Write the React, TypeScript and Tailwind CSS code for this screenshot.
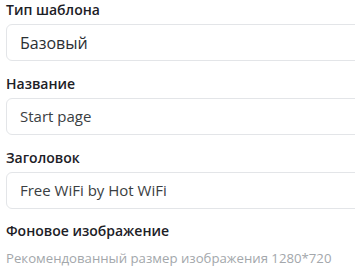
import type { FC } from "react";

type FieldProps = { label: string; value: string; big?: boolean };

const Field: FC<FieldProps> = ({ label, value, big }) => (
  <div className="flex flex-col">
    <label className="mb-1 text-[14px] leading-5 font-semibold text-[#1c2026]">{label}</label>
    <div className="flex h-[37px] w-[360px] items-center rounded-[6px] border border-[#e3e5e8] bg-white px-[13px]">
      <span className={big ? "text-[16px] text-[#2b2f33]" : "text-[15px] text-[#3a3e42]"}>{value}</span>
    </div>
  </div>
);

export default function App() {
  return (
    <div
      className="flex h-[276px] w-[355px] flex-col gap-[13px] overflow-hidden bg-white pl-[6px]"
      style={{ fontFamily: '"Open Sans", "Noto Sans", sans-serif' }}
    >
      <Field label="Тип шаблона" value="Базовый" big />
      <Field label="Название" value="Start page" />
      <Field label="Заголовок" value="Free WiFi by Hot WiFi" />
      <div className="-mt-px flex flex-col">
        <label className="mb-[7px] text-[14px] leading-5 font-semibold text-[#1c2026]">Фоновое изображение</label>
        <p className="text-[13.2px] leading-5 text-[#a3a7ab]">Рекомендованный размер изображения 1280*720</p>
      </div>
    </div>
  );
}
